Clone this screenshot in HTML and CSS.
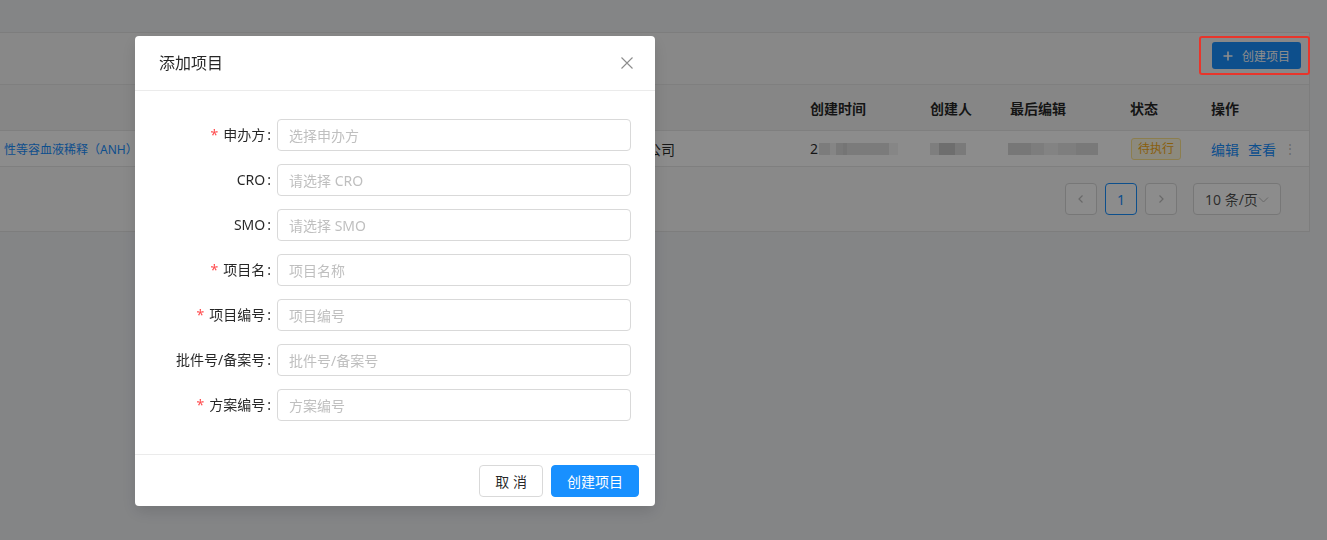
FILE: index.html
```html
<!DOCTYPE html>
<html>
<head>
  <title>项目管理</title>
  <link rel="stylesheet" href="styles.css">
</head>
<body>
  <div class="page">
    <div class="card">
      <div class="toolbar">
        <button class="btn-create" type="button">
          <svg width="10" height="10" viewBox="0 0 10 10"><path d="M5 0.5V9.5M0.5 5H9.5" stroke="#fff" stroke-width="1.6"/></svg>
          <span>创建项目</span>
        </button>
      </div>

      <div class="table">
        <div class="table-row table-head">
          <div class="cell cell-title">项目名称</div>
          <div class="cell">申办方</div>
          <div class="cell">创建时间</div>
          <div class="cell">创建人</div>
          <div class="cell">最后编辑</div>
          <div class="cell">状态</div>
          <div class="cell">操作</div>
        </div>
        <div class="table-row table-data">
          <div class="cell cell-name"><a class="link-name">性等容血液稀释（ANH）</a></div>
          <div class="cell cell-sponsor">北京某某医药科技有限公司</div>
          <div class="cell"><span class="digit">2</span><span class="mosaic mosaic-date"></span></div>
          <div class="cell"><span class="mosaic mosaic-user"></span></div>
          <div class="cell"><span class="mosaic mosaic-edit"></span></div>
          <div class="cell"><span class="tag-pending">待执行</span></div>
          <div class="cell actions">
            <a class="link">编辑</a>
            <a class="link">查看</a>
            <span class="more">⋮</span>
          </div>
        </div>
      </div>

      <div class="pagination">
        <span class="page-item">
          <svg width="10" height="10" viewBox="0 0 10 10"><path d="M6.5 1.5L3 5L6.5 8.5" fill="none" stroke="#bfbfbf" stroke-width="1.2"/></svg>
        </span>
        <span class="page-item page-active">1</span>
        <span class="page-item">
          <svg width="10" height="10" viewBox="0 0 10 10"><path d="M3.5 1.5L7 5L3.5 8.5" fill="none" stroke="#bfbfbf" stroke-width="1.2"/></svg>
        </span>
        <span class="page-size">
          10 条/页
          <svg width="11" height="11" viewBox="0 0 11 11"><path d="M1 3.5L5.5 8L10 3.5" fill="none" stroke="#bfbfbf" stroke-width="1"/></svg>
        </span>
      </div>
    </div>
  </div>

  <div class="mask"></div>
  <div class="annotation"></div>

  <div class="modal">
    <div class="modal-header">
      <span class="modal-title">添加项目</span>
      <svg class="modal-close" width="12" height="12" viewBox="0 0 12 12"><path d="M0.5 0.5L11.5 11.5M11.5 0.5L0.5 11.5" stroke="#8c8c8c" stroke-width="1.1"/></svg>
    </div>
    <div class="modal-body">
      <form class="form">
        <div class="form-item">
          <label class="form-label required">申办方</label>
          <input class="form-input" type="text" placeholder="选择申办方">
        </div>
        <div class="form-item">
          <label class="form-label">CRO</label>
          <input class="form-input" type="text" placeholder="请选择 CRO">
        </div>
        <div class="form-item">
          <label class="form-label">SMO</label>
          <input class="form-input" type="text" placeholder="请选择 SMO">
        </div>
        <div class="form-item">
          <label class="form-label required">项目名</label>
          <input class="form-input" type="text" placeholder="项目名称">
        </div>
        <div class="form-item">
          <label class="form-label required">项目编号</label>
          <input class="form-input" type="text" placeholder="项目编号">
        </div>
        <div class="form-item">
          <label class="form-label">批件号/备案号</label>
          <input class="form-input" type="text" placeholder="批件号/备案号">
        </div>
        <div class="form-item">
          <label class="form-label required">方案编号</label>
          <input class="form-input" type="text" placeholder="方案编号">
        </div>
      </form>
    </div>
    <div class="modal-footer">
      <button class="btn" type="button">取 消</button>
      <button class="btn btn-primary" type="button">创建项目</button>
    </div>
  </div>
</body>
</html>
```

FILE: styles.css
```css
* {
  box-sizing: border-box;
}

body {
  margin: 0;
  height: 540px;
  overflow: hidden;
  background-color: #f0f2f5;
  font-family: "Noto Sans", "Noto Sans CJK SC", sans-serif;
  font-size: 14px;
  color: rgba(0, 0, 0, 0.85);
}

.page {
  padding-top: 32px;
}

.card {
  width: 1310px;
  background-color: #fafafa;
  border-top: 1px solid #e4e4e4;
  border-right: 1px solid #e4e4e4;
  border-bottom: 1px solid #e4e4e4;
}

.toolbar {
  display: flex;
  justify-content: flex-end;
  padding: 9px 8px 15px;
  background-color: #f7f7f7;
}

.btn-create {
  display: flex;
  align-items: center;
  gap: 9px;
  height: 27px;
  padding: 0 11px;
  border: none;
  border-radius: 3px;
  background-color: #1890ff;
  color: #fff;
  font-family: inherit;
  font-size: 12px;
  white-space: nowrap;
}

/* table */
.table {
  border-top: 1px solid #e8e8e8;
}

.table-row {
  display: grid;
  grid-template-columns: 490px 304px 120px 80px 120px 81px 1fr;
  border-bottom: 1px solid #e8e8e8;
}

.table-head {
  height: 46px;
  background-color: #f4f4f4;
  font-weight: 600;
}

.table-data {
  height: 36px;
  background-color: #fff;
}

.cell {
  display: flex;
  align-items: center;
  padding: 0 16px;
  white-space: nowrap;
  overflow: hidden;
}

.cell-title {
  padding-left: 170px;
}

.cell-name {
  padding-left: 4px;
}

.link-name {
  font-size: 12px;
  color: #1890ff;
}

.cell-sponsor {
  justify-content: flex-end;
  padding-right: 119px;
}

.digit {
  margin-right: 1px;
}

.mosaic {
  display: inline-block;
  height: 12px;
}

.mosaic-date {
  width: 96px;
  background: linear-gradient(90deg, #e2e2e2 0 14%, #f2f2f2 14% 22%, #dcdcdc 22% 30%, #d6d6d6 30% 36%, #e0e0e0 36% 88%, #f4f4f4 88% 100%);
}

.mosaic-user {
  width: 36px;
  background: linear-gradient(90deg, #e6e6e6 0 25%, #c8c8c8 25% 70%, #dedede 70% 100%);
}

.mosaic-edit {
  width: 95px;
  margin-left: -2px;
  background: linear-gradient(90deg, #d9d9d9 0 26%, #e4e4e4 26% 40%, #eeeeee 40% 56%, #e6e6e6 56% 76%, #dcdcdc 76% 100%);
}

.tag-pending {
  display: inline-block;
  height: 22px;
  line-height: 20px;
  padding: 0 6px;
  margin-left: 1px;
  font-size: 12px;
  color: #faad14;
  background-color: #fffbe6;
  border: 1px solid #ffe58f;
  border-radius: 3px;
}

.actions {
  gap: 9px;
}

.link {
  color: #1890ff;
}

.more {
  margin-left: -1px;
  color: #bfbfbf;
  font-size: 12px;
}

/* pagination */
.pagination {
  display: flex;
  justify-content: flex-end;
  align-items: center;
  gap: 8px;
  padding: 16px 28px 16px 0;
}

.page-item {
  display: flex;
  align-items: center;
  justify-content: center;
  width: 32px;
  height: 32px;
  border: 1px solid #d9d9d9;
  border-radius: 4px;
  background-color: #fff;
}

.page-active {
  border-color: #1890ff;
  color: #1890ff;
}

.page-size {
  display: flex;
  align-items: center;
  width: 88px;
  height: 32px;
  margin-left: 8px;
  padding-left: 11px;
  border: 1px solid #d9d9d9;
  border-radius: 4px;
  background-color: #fff;
  color: rgba(0, 0, 0, 0.7);
}

/* overlay */
.mask {
  position: fixed;
  top: 0;
  left: 0;
  right: 0;
  bottom: 0;
  background-color: rgba(0, 0, 0, 0.45);
}

.annotation {
  position: fixed;
  left: 1199px;
  top: 36px;
  width: 111px;
  height: 39px;
  border: 2px solid #e8352b;
  border-radius: 3px;
}

.modal {
  position: fixed;
  left: 135px;
  top: 36px;
  width: 520px;
  background-color: #fff;
  border-radius: 4px;
  box-shadow: 0 6px 16px rgba(0, 0, 0, 0.12);
}

.modal-header {
  display: flex;
  justify-content: space-between;
  align-items: center;
  padding: 16px 22px 16px 24px;
  border-bottom: 1px solid #ebebeb;
}

.modal-title {
  font-size: 16px;
  line-height: 22px;
}

.modal-body {
  padding: 28px 24px 20px;
}

.form-item {
  display: grid;
  grid-template-columns: 118px 1fr;
  margin-bottom: 13px;
}

.form-label {
  text-align: right;
  line-height: 32px;
  white-space: nowrap;
}

.form-label::after {
  content: ":";
  margin: 0 6px 0 2px;
}

.required::before {
  content: "*";
  margin-right: 5px;
  color: #ff4d4f;
}

.form-input {
  height: 32px;
  padding: 4px 11px;
  border: 1px solid #d9d9d9;
  border-radius: 4px;
  font-family: inherit;
  font-size: 14px;
}

.form-input::placeholder {
  color: #bfbfbf;
}

.modal-footer {
  display: flex;
  justify-content: flex-end;
  gap: 8px;
  padding: 10px 16px 9px;
  border-top: 1px solid #ebebeb;
}

.btn {
  height: 32px;
  padding: 0 15px;
  border: 1px solid #d9d9d9;
  border-radius: 4px;
  background-color: #fff;
  color: rgba(0, 0, 0, 0.85);
  font-family: inherit;
  font-size: 14px;
}

.btn-primary {
  border-color: #1890ff;
  background-color: #1890ff;
  color: #fff;
}
```
